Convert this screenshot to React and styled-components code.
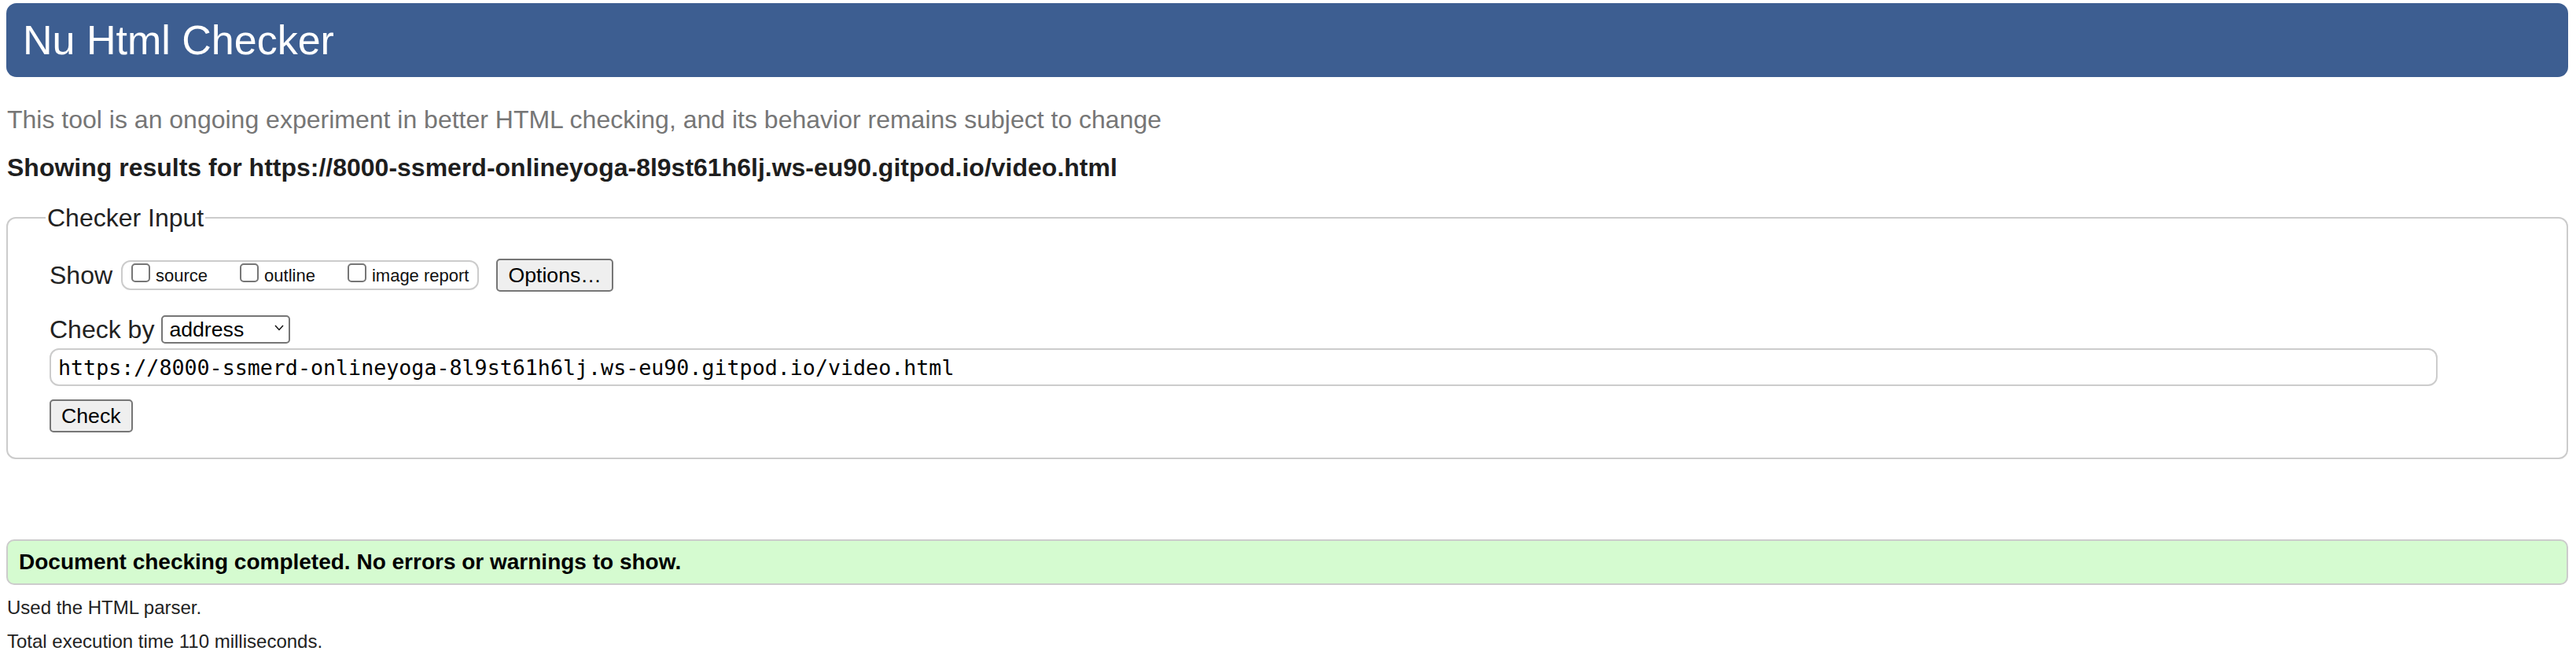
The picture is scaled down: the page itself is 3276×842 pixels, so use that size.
import React from 'react';
import styled, { createGlobalStyle } from 'styled-components';

const CHECKED_URL = 'https://8000-ssmerd-onlineyoga-8l9st61h6lj.ws-eu90.gitpod.io/video.html';

const GlobalStyle = createGlobalStyle`
  html, body {
    margin: 0;
    background: #fff;
  }
  body {
    padding: 4px 10px 0 8px;
    font-family: 'Liberation Sans', Arial, Helvetica, sans-serif;
    color: #222;
  }
`;

const Banner = styled.h1`
  margin: 0;
  height: 94px;
  box-sizing: border-box;
  display: flex;
  align-items: center;
  padding: 0 21px;
  border-radius: 13px;
  background: #3d5e91;
  color: #fff;
  font-size: 52px;
  font-weight: normal;
`;

const About = styled.p`
  margin: 36px 0 0 1px;
  font-size: 32px;
  line-height: 36px;
  color: #767676;
`;

const ResultsFor = styled.h2`
  margin: 25px 0 0 1px;
  font-size: 32px;
  line-height: 36px;
  font-weight: bold;
  color: #1e1e1e;
`;

const InputFieldset = styled.fieldset`
  margin: 28px 0 0;
  padding: 0 53px 32px;
  border: 2px solid #ccc;
  border-radius: 12px;
  min-width: 0;
`;

const Legend = styled.legend`
  margin-left: -5px;
  padding: 0 2px;
  font-size: 32px;
  line-height: 36px;
`;

const Rows = styled.div`
  display: flex;
  flex-direction: column;
  align-items: flex-start;
  padding-top: 34px;
`;

const Row = styled.div`
  display: flex;
  align-items: center;
  height: ${p => p.$height}px;
  margin-top: ${p => p.$top || 0}px;
`;

const Label = styled.span`
  font-size: 32px;
  line-height: 36px;
  margin-right: ${p => p.$gap}px;
`;

const OptionGroup = styled.div`
  display: flex;
  align-items: flex-end;
  gap: 41px;
  height: 38px;
  box-sizing: border-box;
  padding: 0 11px 5px;
  margin-right: 22px;
  border: 2px solid #ccc;
  border-radius: 12px;
`;

const OptionItem = styled.label`
  display: flex;
  align-items: flex-end;
`;

const Checkbox = styled.input.attrs({ type: 'checkbox' })`
  appearance: none;
  box-sizing: border-box;
  width: 24px;
  height: 24px;
  margin: 0 7px 3px 0;
  border: 2px solid #767676;
  border-radius: 5px;
  background: #fff;
`;

const OptionText = styled.span`
  font-size: 22px;
  line-height: 22px;
  color: #111;
`;

const Button = styled.button`
  height: 42px;
  box-sizing: border-box;
  margin-top: ${p => p.$top || 0}px;
  padding: 0 13px;
  border: 2px solid #767676;
  border-radius: 5px;
  background: #efefef;
  color: #000;
  font-family: 'Liberation Sans', Arial, sans-serif;
  font-size: 26.67px;
`;

const SelectWrap = styled.span`
  position: relative;
  display: inline-flex;
`;

const Select = styled.select`
  appearance: none;
  width: 164px;
  height: 36px;
  box-sizing: border-box;
  padding: 0 0 0 8px;
  border: 2px solid #767676;
  border-radius: 5px;
  background: #fff;
  color: #000;
  font-family: 'Liberation Sans', Arial, sans-serif;
  font-size: 26.67px;
`;

const Chevron = styled.svg`
  position: absolute;
  right: 8px;
  top: 12px;
  pointer-events: none;
`;

const UrlInput = styled.input`
  width: calc(100% - 111px);
  height: 48px;
  box-sizing: border-box;
  margin-top: 6px;
  padding: 0 9px;
  border: 2px solid #ccc;
  border-radius: 12px;
  color: #000;
  font-family: 'DejaVu Sans Mono', 'Liberation Mono', monospace;
  font-size: 26.67px;
`;

const Success = styled.div`
  margin-top: 102px;
  padding: 10px 14px;
  border: 2px solid #ccc;
  border-radius: 10px;
  background: #d5fbd0;
  color: #000;
  font-size: 28px;
  line-height: 34px;
  font-weight: bold;
`;

const Details = styled.p`
  margin: ${p => p.$top}px 0 0 1px;
  font-size: 24px;
  line-height: 28px;
`;

const options = ['source', 'outline', 'image report'];

export default function App() {
  return (
    <>
      <GlobalStyle />
      <Banner>Nu Html Checker</Banner>
      <About>This tool is an ongoing experiment in better HTML checking, and its behavior remains subject to change</About>
      <ResultsFor>Showing results for {CHECKED_URL}</ResultsFor>

      <InputFieldset>
        <Legend>Checker Input</Legend>
        <Rows>
          <Row $height={42}>
            <Label $gap={11}>Show</Label>
            <OptionGroup>
              {options.map(name => (
                <OptionItem key={name}>
                  <Checkbox name={name} />
                  <OptionText>{name}</OptionText>
                </OptionItem>
              ))}
            </OptionGroup>
            <Button type='button'>Options…</Button>
          </Row>

          <Row $height={36} $top={30}>
            <Label $gap={9}>Check by</Label>
            <SelectWrap>
              <Select defaultValue='address'>
                <option value='address'>address</option>
                <option value='file'>file upload</option>
                <option value='textarea'>text input</option>
              </Select>
              <Chevron width='12' height='8' viewBox='0 0 12 8'>
                <polyline points='1,1 6,6.5 11,1' fill='none' stroke='#111' strokeWidth='1.5' />
              </Chevron>
            </SelectWrap>
          </Row>

          <UrlInput type='url' defaultValue={CHECKED_URL} />
          <Button type='submit' $top={17}>Check</Button>
        </Rows>
      </InputFieldset>

      <Success>Document checking completed. No errors or warnings to show.</Success>
      <Details $top={15}>Used the HTML parser.</Details>
      <Details $top={15}>Total execution time 110 milliseconds.</Details>
    </>
  );
}
